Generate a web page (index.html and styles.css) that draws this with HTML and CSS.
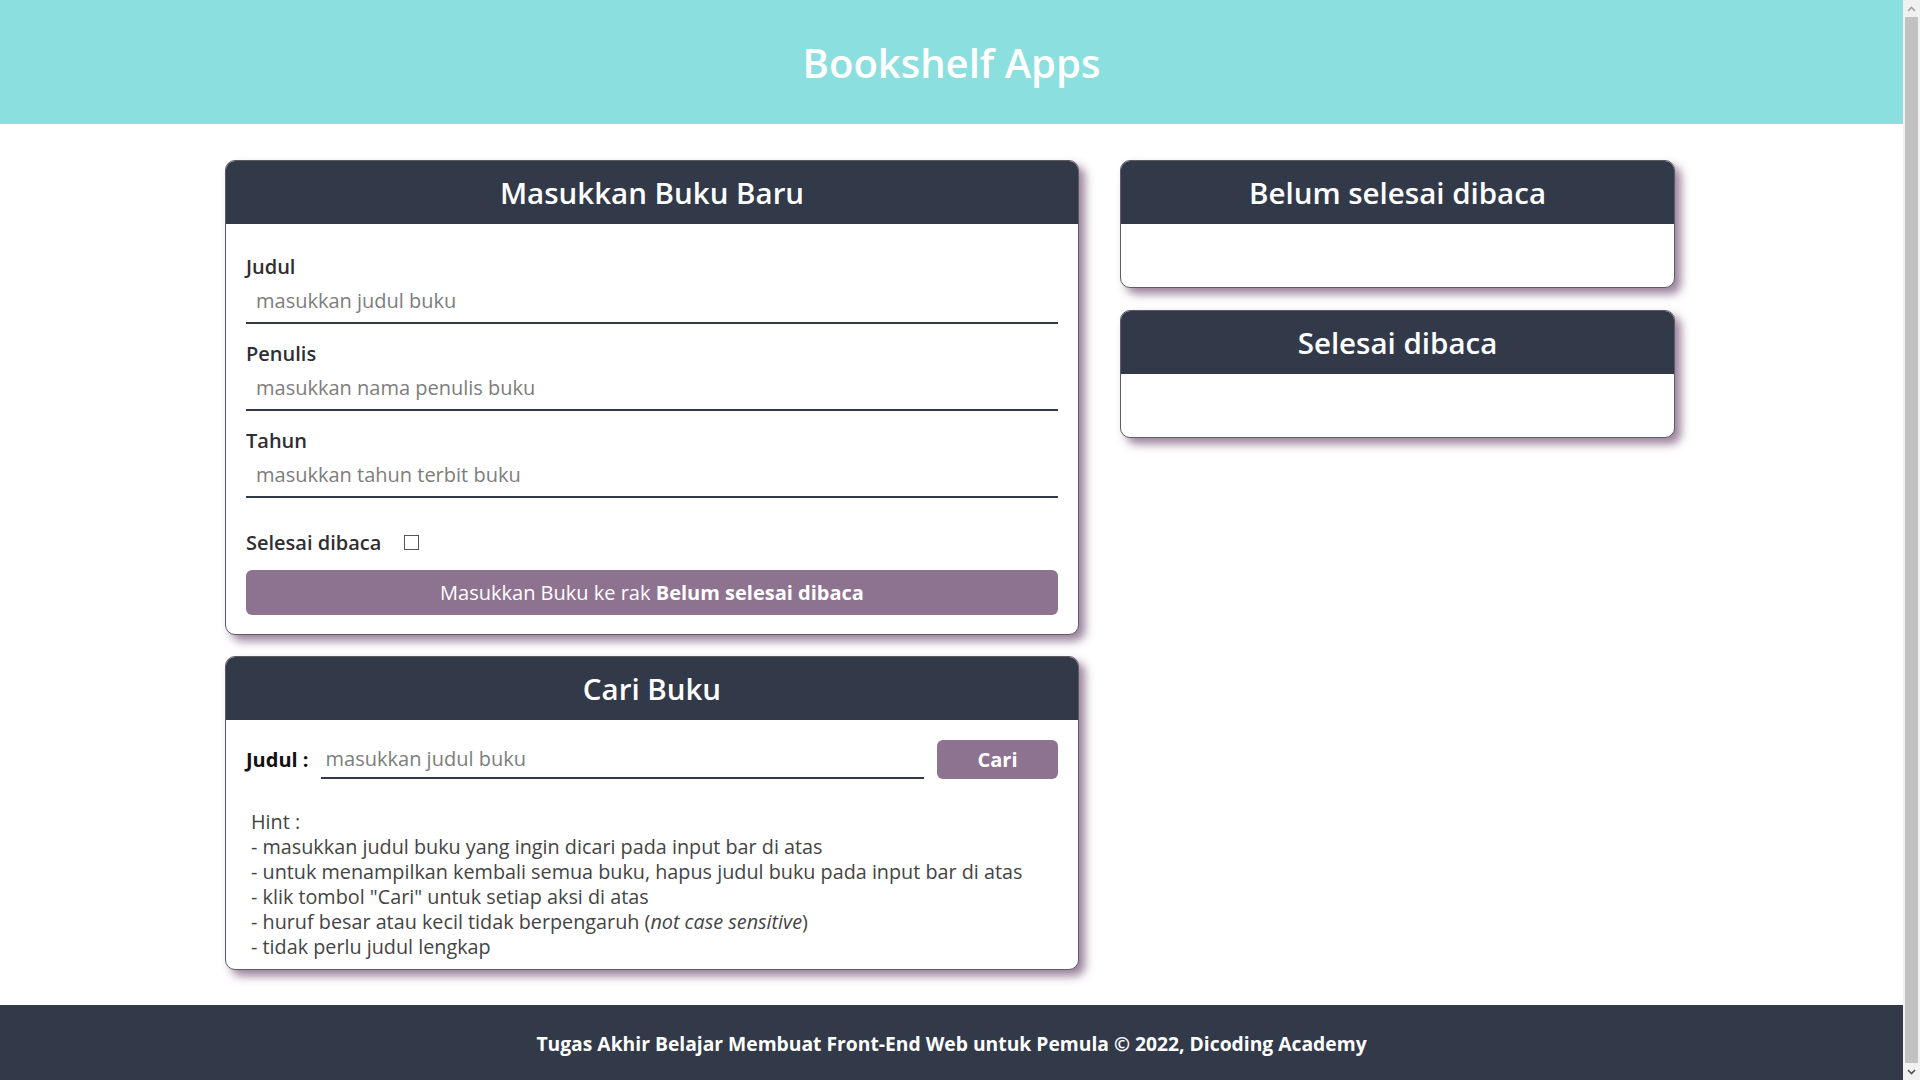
FILE: index.html
```html
<!DOCTYPE html>
<html lang="id">
<head>
<meta charset="utf-8">
<title>Bookshelf Apps</title>
<link rel="stylesheet" href="styles.css">
</head>
<body>
<header class="head_bar">
  <h1 class="head_bar__title">Bookshelf Apps</h1>
</header>
<main class="main">
  <div class="col col-left">
    <section class="card">
      <h2 class="card__title">Masukkan Buku Baru</h2>
      <form class="card__body form">
        <div class="field">
          <label class="field__label" for="inputBookTitle">Judul</label>
          <input class="field__input" id="inputBookTitle" type="text" placeholder="masukkan judul buku">
        </div>
        <div class="field">
          <label class="field__label" for="inputBookAuthor">Penulis</label>
          <input class="field__input" id="inputBookAuthor" type="text" placeholder="masukkan nama penulis buku">
        </div>
        <div class="field">
          <label class="field__label" for="inputBookYear">Tahun</label>
          <input class="field__input" id="inputBookYear" type="text" placeholder="masukkan tahun terbit buku">
        </div>
        <div class="check_row">
          <label class="check_row__label" for="inputBookIsComplete">Selesai dibaca</label>
          <input class="checkbox" id="inputBookIsComplete" type="checkbox">
        </div>
        <button class="btn btn-submit" type="button">Masukkan Buku ke rak <span class="btn__strong">Belum selesai dibaca</span></button>
      </form>
    </section>
    <section class="card">
      <h2 class="card__title">Cari Buku</h2>
      <div class="card__body search">
        <form class="search__row">
          <label class="search__label" for="searchBookTitle">Judul :</label>
          <input class="search__input" id="searchBookTitle" type="text" placeholder="masukkan judul buku">
          <button class="btn btn-search" type="button">Cari</button>
        </form>
        <p class="hint">Hint :<br>- masukkan judul buku yang ingin dicari pada input bar di atas<br>- untuk menampilkan kembali semua buku, hapus judul buku pada input bar di atas<br>- klik tombol "Cari" untuk setiap aksi di atas<br>- huruf besar atau kecil tidak berpengaruh (<em>not case sensitive</em>)<br>- tidak perlu judul lengkap</p>
      </div>
    </section>
  </div>
  <div class="col col-right">
    <section class="card">
      <h2 class="card__title">Belum selesai dibaca</h2>
      <div class="shelf__list"></div>
    </section>
    <section class="card">
      <h2 class="card__title">Selesai dibaca</h2>
      <div class="shelf__list"></div>
    </section>
  </div>
</main>
<footer class="footer">Tugas Akhir Belajar Membuat Front-End Web untuk Pemula © 2022, Dicoding Academy</footer>
<div class="scrollbar" aria-hidden="true">
  <div class="scrollbar__btn">
    <svg width="9" height="6" viewBox="0 0 9 6"><path d="M1 5 L4.5 1.5 L8 5" fill="none" stroke="#a3a3a3" stroke-width="1.6"/></svg>
  </div>
  <div class="scrollbar__track"><div class="scrollbar__thumb"></div></div>
  <div class="scrollbar__btn">
    <svg width="9" height="6" viewBox="0 0 9 6"><path d="M1 1 L4.5 4.5 L8 1" fill="none" stroke="#505050" stroke-width="1.6"/></svg>
  </div>
</div>
</body>
</html>
```

FILE: styles.css
```css
* { box-sizing: border-box; }
html, body { margin: 0; padding: 0; }
body {
  font-family: "Open Sans", "Noto Sans", sans-serif;
  color: #2e2e33;
  background: #fff;
  margin-right: 17px;
}
.head_bar {
  background: #8bdfde;
  height: 124px;
  display: flex;
  align-items: center;
  justify-content: center;
}
.head_bar__title {
  margin: 0;
  color: #fff;
  font-size: 40px;
  font-weight: 600;
  line-height: 1;
  padding-top: 1px;
}
.main {
  display: flex;
  justify-content: center;
  align-items: flex-start;
  gap: 41px;
  padding: 36px 3px 35px 0;
}
.col { display: flex; flex-direction: column; }
.col-left { width: 854px; gap: 21px; }
.col-right { width: 555px; gap: 22px; }
.card {
  background: #fff;
  border: 1px solid #5f5a66;
  border-radius: 10px;
  overflow: hidden;
  box-shadow: 6px 6px 10px rgba(142, 115, 144, 0.9);
}
.card__title {
  margin: 0;
  height: 63px;
  background: #323a4a;
  color: #fff;
  font-size: 29.5px;
  font-weight: 600;
  display: flex;
  align-items: center;
  justify-content: center;
}
.form { padding: 30px 20px 19px; }
.field + .field { margin-top: 17px; }
.field__label {
  display: block;
  font-size: 20px;
  line-height: 25px;
  font-weight: 600;
}
.field__input {
  display: block;
  width: 100%;
  border: none;
  border-bottom: 2px solid #323a4a;
  padding: 9px 10px;
  font-family: inherit;
  font-size: 20px;
  line-height: 25px;
  color: #333;
  outline: none;
  background: transparent;
}
.field__input::placeholder, .search__input::placeholder { color: #7d7d7d; }
.check_row {
  margin-top: 32px;
  display: flex;
  align-items: center;
  gap: 23px;
  font-size: 20px;
  line-height: 25px;
  font-weight: 600;
}
.checkbox {
  appearance: none;
  -webkit-appearance: none;
  width: 15px;
  height: 15px;
  margin: 0;
  border: 1px solid #555;
  background: #fff;
}
.btn {
  border: none;
  background: #8e7390;
  color: #fff;
  font-family: inherit;
  border-radius: 6px;
  cursor: pointer;
}
.btn-submit {
  margin-top: 15px;
  width: 100%;
  height: 45px;
  font-size: 20px;
  line-height: 25px;
}
.btn__strong { font-weight: 700; }
.search { padding: 20px 20px 10px; }
.search__row {
  display: flex;
  align-items: center;
  gap: 12px;
}
.search__label {
  font-size: 20px;
  font-weight: 700;
  line-height: 25px;
  color: #111;
}
.search__input {
  flex: 1;
  border: none;
  border-bottom: 2px solid #323a4a;
  padding: 6px 5px;
  font-family: inherit;
  font-size: 20px;
  line-height: 25px;
  outline: none;
  background: transparent;
}
.btn-search {
  width: 121px;
  height: 39px;
  margin-left: 1px;
  font-size: 20px;
  font-weight: 700;
}
.hint {
  margin: 30px 0 0;
  padding-left: 5px;
  font-size: 19.8px;
  line-height: 25px;
  color: #444;
}
.shelf__list { height: 63px; }
.footer {
  background: #323a4a;
  color: #fff;
  text-align: center;
  font-size: 19.3px;
  font-weight: 700;
  line-height: 25px;
  padding: 26px 0 30px;
}
.scrollbar {
  position: fixed;
  top: 0;
  right: 0;
  width: 17px;
  height: 100vh;
  display: flex;
  flex-direction: column;
  background: #f1f1f1;
}
.scrollbar__btn {
  height: 17px;
  flex: none;
  display: flex;
  align-items: center;
  justify-content: center;
}
.scrollbar__track {
  flex: 1;
  padding: 0 2px;
}
.scrollbar__thumb {
  height: 100%;
  background: #c1c1c1;
}
```
